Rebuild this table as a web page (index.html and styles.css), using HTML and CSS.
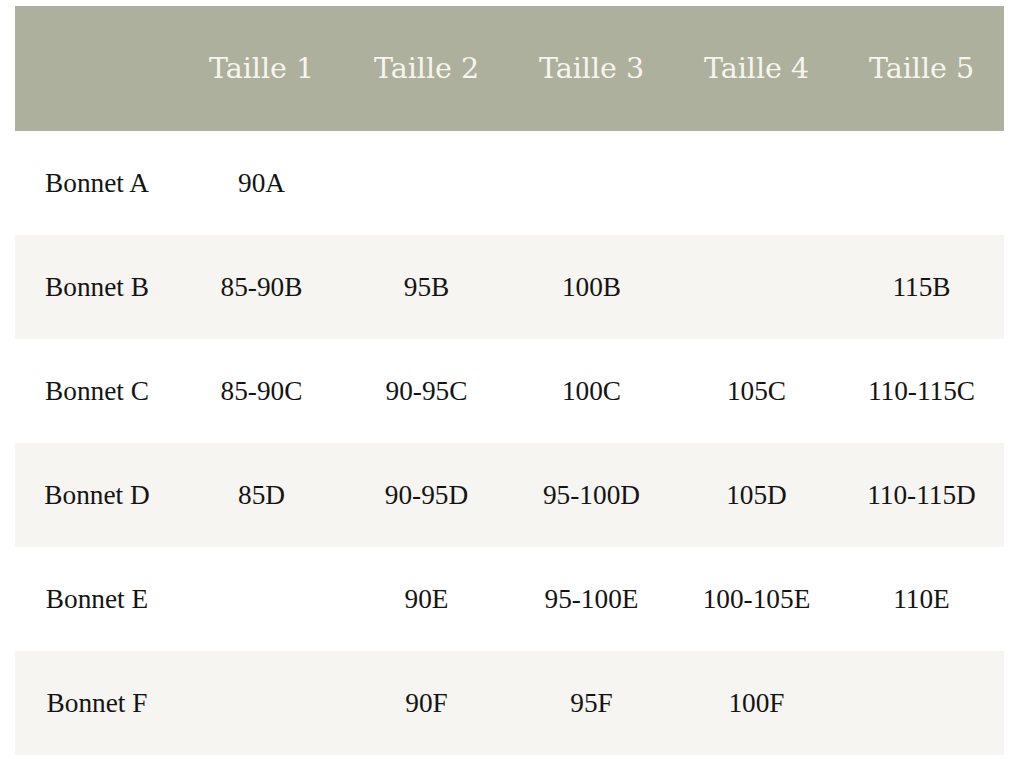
FILE: index.html
```html
<!DOCTYPE html>
<html lang="fr">
<head>
<meta charset="utf-8">
<title>Guide des tailles</title>
<link rel="stylesheet" href="styles.css">
</head>
<body>
<table class="size-table">
  <colgroup>
    <col class="col-label">
    <col class="col-size"><col class="col-size"><col class="col-size"><col class="col-size"><col class="col-size">
  </colgroup>
  <thead>
    <tr class="head-row">
      <th></th>
      <th>Taille 1</th>
      <th>Taille 2</th>
      <th>Taille 3</th>
      <th>Taille 4</th>
      <th>Taille 5</th>
    </tr>
  </thead>
  <tbody>
    <tr class="row"><td>Bonnet A</td><td>90A</td><td></td><td></td><td></td><td></td></tr>
    <tr class="row alt"><td>Bonnet B</td><td>85-90B</td><td>95B</td><td>100B</td><td></td><td>115B</td></tr>
    <tr class="row"><td>Bonnet C</td><td>85-90C</td><td>90-95C</td><td>100C</td><td>105C</td><td>110-115C</td></tr>
    <tr class="row alt"><td>Bonnet D</td><td>85D</td><td>90-95D</td><td>95-100D</td><td>105D</td><td>110-115D</td></tr>
    <tr class="row"><td>Bonnet E</td><td></td><td>90E</td><td>95-100E</td><td>100-105E</td><td>110E</td></tr>
    <tr class="row alt"><td>Bonnet F</td><td></td><td>90F</td><td>95F</td><td>100F</td><td></td></tr>
  </tbody>
</table>
</body>
</html>
```
FILE: styles.css
```css
html, body {
  margin: 0;
  padding: 0;
  background: #ffffff;
}
body {
  padding: 6px 20px 0 15px;
}
.size-table {
  border-collapse: collapse;
  table-layout: fixed;
  width: 989px;
}
.col-label { width: 164px; }
.col-size { width: 165px; }
.head-row th {
  background: #adb09c;
  color: #f7f5ef;
  font-family: "DejaVu Serif", serif;
  font-weight: normal;
  font-size: 28.5px;
  height: 125px;
  padding: 0;
  text-align: center;
  vertical-align: middle;
}
.row td {
  height: 104px;
  padding: 0;
  text-align: center;
  vertical-align: middle;
  font-family: "Liberation Serif", "Times New Roman", serif;
  font-size: 27.3px;
  color: #141414;
}
.row.alt td {
  background: #f6f5f1;
}
```
